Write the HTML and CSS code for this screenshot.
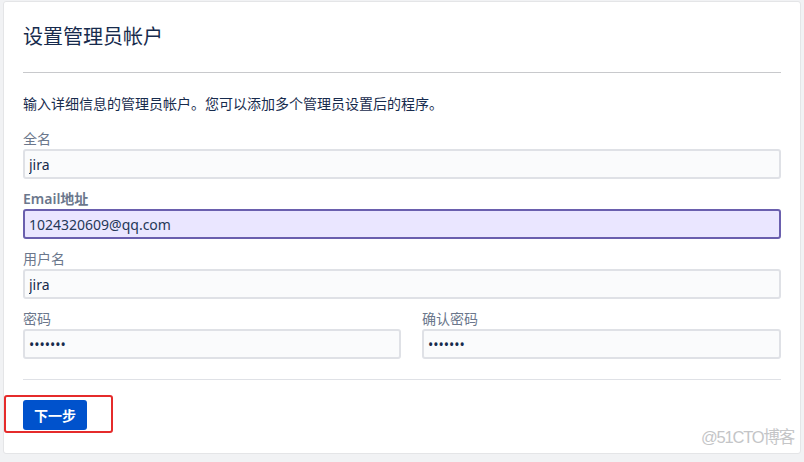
FILE: index.html
```html
<!DOCTYPE html>
<html lang="zh-CN">
<head>
<meta charset="utf-8">
<title>设置管理员帐户</title>
<link rel="stylesheet" href="styles.css">
</head>
<body>
<div class="card">
  <h1 class="title">设置管理员帐户</h1>
  <hr class="rule-top">
  <p class="desc">输入详细信息的管理员帐户。您可以添加多个管理员设置后的程序。</p>
  <form class="form">
    <div class="field">
      <label class="label">全名</label>
      <input class="input" type="text" value="jira">
    </div>
    <div class="field">
      <label class="label label-active">Email地址</label>
      <input class="input input-focus" type="text" value="1024320609@qq.com">
    </div>
    <div class="field">
      <label class="label">用户名</label>
      <input class="input" type="text" value="jira">
    </div>
    <div class="row">
      <div class="field">
        <label class="label">密码</label>
        <input class="input" type="password" value="1234567">
      </div>
      <div class="field">
        <label class="label">确认密码</label>
        <input class="input" type="password" value="1234567">
      </div>
    </div>
    <hr class="rule-bottom">
    <div class="actions">
      <span class="highlight"></span>
      <button class="btn" type="button">下一步</button>
    </div>
  </form>
  <div class="watermark">@51CTO博客</div>
</div>
</body>
</html>
```
FILE: styles.css
```css
html, body {
  margin: 0;
  padding: 0;
}
body {
  background: #f1f2f4;
  font-family: "Noto Sans", "Noto Sans CJK SC", sans-serif;
  color: #172b4d;
  width: 804px;
  height: 462px;
  overflow: hidden;
}
.card {
  position: relative;
  box-sizing: border-box;
  margin: 1px 3px 0 3px;
  width: 798px;
  height: 453px;
  background: #fff;
  border: 1px solid #e4e5e7;
  border-radius: 3px;
  padding: 20px 19px 0 19px;
}
.title {
  margin: 0;
  font-size: 20px;
  line-height: 28px;
  font-weight: 400;
  color: #172b4d;
  font-family: "Noto Sans CJK SC", sans-serif;
}
.rule-top {
  margin: 22px 0 0 0;
  border: 0;
  border-top: 1px solid #c8c9cc;
  height: 0;
}
.desc {
  margin: 20px 0 0 0;
  font-size: 14px;
  line-height: 20px;
  font-family: "Noto Sans CJK SC", sans-serif;
  color: #172b4d;
}
.form {
  margin: 16px 0 0 0;
  display: flex;
  flex-direction: column;
  gap: 10px;
}
.field {
  display: flex;
  flex-direction: column;
}
.label {
  font-size: 14px;
  line-height: 20px;
  color: #6b778c;
  font-family: "Noto Sans", "Noto Sans CJK SC", sans-serif;
}
.label-active {
  color: #6b778c;
  font-weight: 600;
}
.input {
  box-sizing: border-box;
  height: 30px;
  width: 100%;
  margin: 0;
  padding: 0 4px;
  border: 2px solid #dfe1e6;
  border-radius: 3px;
  background: #fafbfc;
  font-family: "Noto Sans", sans-serif;
  font-size: 14px;
  color: #172b4d;
  outline: none;
}
.input-focus {
  border-color: #6a5fae;
  background: #eae6ff;
  color: #253858;
}
.row {
  display: grid;
  grid-template-columns: 378px 1fr;
  column-gap: 21px;
}
.rule-bottom {
  margin: 10px 0 0 0;
  border: 0;
  border-top: 1px solid #dfe1e6;
  height: 0;
}
.actions {
  position: relative;
  margin-top: 10px;
  display: flex;
}
.btn {
  height: 30px;
  width: 64px;
  padding: 0;
  border: 0;
  border-radius: 3px;
  background: #0052cc;
  color: #fff;
  font-family: "Noto Sans CJK SC", sans-serif;
  font-size: 14px;
  font-weight: 700;
  line-height: 30px;
}
.highlight {
  position: absolute;
  left: -19px;
  top: -5px;
  width: 109px;
  height: 38px;
  box-sizing: border-box;
  border: 2px solid #e52b2b;
  border-radius: 3px;
}
.watermark {
  position: absolute;
  right: 6px;
  bottom: 5px;
  font-family: "Liberation Sans", "Noto Sans CJK SC", sans-serif;
  font-size: 16.5px;
  letter-spacing: -1.2px;
  color: #c4c5c7;
}
```
